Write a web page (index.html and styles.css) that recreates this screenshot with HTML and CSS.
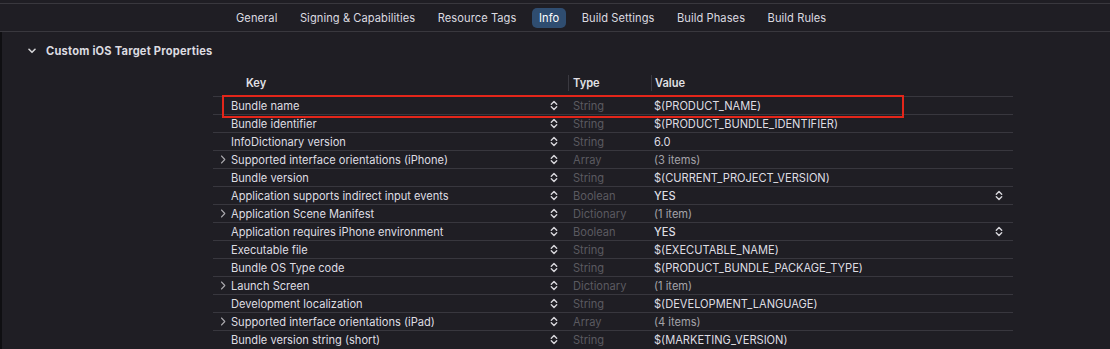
FILE: index.html
```html
<!DOCTYPE html>
<html lang="en">
<head>
<meta charset="utf-8">
<title>Info</title>
<link rel="stylesheet" href="styles.css">
</head>
<body>
<div class="top-strip"></div>
<nav class="tabbar">
  <span class="tab">General</span>
  <span class="tab">Signing &amp; Capabilities</span>
  <span class="tab">Resource Tags</span>
  <span class="tab active">Info</span>
  <span class="tab">Build Settings</span>
  <span class="tab">Build Phases</span>
  <span class="tab">Build Rules</span>
</nav>
<main class="main">
  <div class="section-title">
    <svg class="sec-chev" width="8" height="6" viewBox="0 0 8 6"><path d="M1 1.3 L4 4.3 L7 1.3" fill="none" stroke="#d4d4d6" stroke-width="1.6" stroke-linecap="round" stroke-linejoin="round"/></svg>
    <span>Custom iOS Target Properties</span>
  </div>
  <div class="table">
    <div class="thead">
      <div class="th th-key">Key</div>
      <div class="th th-type">Type</div>
      <div class="th th-value">Value</div>
    </div>
    <div class="rows">
      <div class="row"><div class="key"><i class="disc"></i><span>Bundle name</span><svg class="step" viewBox="0 0 8 11"><path d="M1.3 4.2 L4 1.4 L6.7 4.2 M1.3 6.8 L4 9.6 L6.7 6.8"/></svg></div><div class="type">String</div><div class="value">$(PRODUCT_NAME)</div></div>
      <div class="row"><div class="key"><i class="disc"></i><span>Bundle identifier</span><svg class="step" viewBox="0 0 8 11"><path d="M1.3 4.2 L4 1.4 L6.7 4.2 M1.3 6.8 L4 9.6 L6.7 6.8"/></svg></div><div class="type">String</div><div class="value">$(PRODUCT_BUNDLE_IDENTIFIER)</div></div>
      <div class="row"><div class="key"><i class="disc"></i><span>InfoDictionary version</span><svg class="step" viewBox="0 0 8 11"><path d="M1.3 4.2 L4 1.4 L6.7 4.2 M1.3 6.8 L4 9.6 L6.7 6.8"/></svg></div><div class="type">String</div><div class="value">6.0</div></div>
      <div class="row"><div class="key"><svg class="disc" viewBox="0 0 6 9"><path d="M1.5 1 L4.8 4.5 L1.5 8"/></svg><span>Supported interface orientations (iPhone)</span><svg class="step" viewBox="0 0 8 11"><path d="M1.3 4.2 L4 1.4 L6.7 4.2 M1.3 6.8 L4 9.6 L6.7 6.8"/></svg></div><div class="type">Array</div><div class="value dim">(3 items)</div></div>
      <div class="row"><div class="key"><i class="disc"></i><span>Bundle version</span><svg class="step" viewBox="0 0 8 11"><path d="M1.3 4.2 L4 1.4 L6.7 4.2 M1.3 6.8 L4 9.6 L6.7 6.8"/></svg></div><div class="type">String</div><div class="value">$(CURRENT_PROJECT_VERSION)</div></div>
      <div class="row"><div class="key"><i class="disc"></i><span>Application supports indirect input events</span><svg class="step" viewBox="0 0 8 11"><path d="M1.3 4.2 L4 1.4 L6.7 4.2 M1.3 6.8 L4 9.6 L6.7 6.8"/></svg></div><div class="type">Boolean</div><div class="value popup"><span class="bold">YES</span><svg class="step" viewBox="0 0 8 11"><path d="M1.3 4.2 L4 1.4 L6.7 4.2 M1.3 6.8 L4 9.6 L6.7 6.8"/></svg></div></div>
      <div class="row"><div class="key"><svg class="disc" viewBox="0 0 6 9"><path d="M1.5 1 L4.8 4.5 L1.5 8"/></svg><span>Application Scene Manifest</span><svg class="step" viewBox="0 0 8 11"><path d="M1.3 4.2 L4 1.4 L6.7 4.2 M1.3 6.8 L4 9.6 L6.7 6.8"/></svg></div><div class="type">Dictionary</div><div class="value dim">(1 item)</div></div>
      <div class="row"><div class="key"><i class="disc"></i><span>Application requires iPhone environment</span><svg class="step" viewBox="0 0 8 11"><path d="M1.3 4.2 L4 1.4 L6.7 4.2 M1.3 6.8 L4 9.6 L6.7 6.8"/></svg></div><div class="type">Boolean</div><div class="value popup"><span class="bold">YES</span><svg class="step" viewBox="0 0 8 11"><path d="M1.3 4.2 L4 1.4 L6.7 4.2 M1.3 6.8 L4 9.6 L6.7 6.8"/></svg></div></div>
      <div class="row"><div class="key"><i class="disc"></i><span>Executable file</span><svg class="step" viewBox="0 0 8 11"><path d="M1.3 4.2 L4 1.4 L6.7 4.2 M1.3 6.8 L4 9.6 L6.7 6.8"/></svg></div><div class="type">String</div><div class="value">$(EXECUTABLE_NAME)</div></div>
      <div class="row"><div class="key"><i class="disc"></i><span>Bundle OS Type code</span><svg class="step" viewBox="0 0 8 11"><path d="M1.3 4.2 L4 1.4 L6.7 4.2 M1.3 6.8 L4 9.6 L6.7 6.8"/></svg></div><div class="type">String</div><div class="value">$(PRODUCT_BUNDLE_PACKAGE_TYPE)</div></div>
      <div class="row"><div class="key"><svg class="disc" viewBox="0 0 6 9"><path d="M1.5 1 L4.8 4.5 L1.5 8"/></svg><span>Launch Screen</span><svg class="step" viewBox="0 0 8 11"><path d="M1.3 4.2 L4 1.4 L6.7 4.2 M1.3 6.8 L4 9.6 L6.7 6.8"/></svg></div><div class="type">Dictionary</div><div class="value dim">(1 item)</div></div>
      <div class="row"><div class="key"><i class="disc"></i><span>Development localization</span><svg class="step" viewBox="0 0 8 11"><path d="M1.3 4.2 L4 1.4 L6.7 4.2 M1.3 6.8 L4 9.6 L6.7 6.8"/></svg></div><div class="type">String</div><div class="value">$(DEVELOPMENT_LANGUAGE)</div></div>
      <div class="row"><div class="key"><svg class="disc" viewBox="0 0 6 9"><path d="M1.5 1 L4.8 4.5 L1.5 8"/></svg><span>Supported interface orientations (iPad)</span><svg class="step" viewBox="0 0 8 11"><path d="M1.3 4.2 L4 1.4 L6.7 4.2 M1.3 6.8 L4 9.6 L6.7 6.8"/></svg></div><div class="type">Array</div><div class="value dim">(4 items)</div></div>
      <div class="row"><div class="key"><i class="disc"></i><span>Bundle version string (short)</span><svg class="step" viewBox="0 0 8 11"><path d="M1.3 4.2 L4 1.4 L6.7 4.2 M1.3 6.8 L4 9.6 L6.7 6.8"/></svg></div><div class="type">String</div><div class="value">$(MARKETING_VERSION)</div></div>
      <div class="highlight"></div>
    </div>
  </div>
</main>
</body>
</html>
```
FILE: styles.css
```css
* { box-sizing: border-box; }
html, body {
  margin: 0;
  height: 100%;
  background: #1f1e24;
  overflow: hidden;
}
body {
  font-family: Inter, "Noto Sans", "Liberation Sans", sans-serif;
  font-size: 11.1px;
  color: #dedde2;
}
.top-strip {
  height: 4px;
  border-bottom: 1px solid #39383e;
}
.tabbar {
  height: 28px;
  border-bottom: 1px solid #39383e;
  display: flex;
  align-items: center;
  gap: 8.5px;
  padding-left: 229px;
}
.tab {
  height: 20px;
  line-height: 20px;
  padding: 0 7px;
  border-radius: 5px;
  color: #dcdbe0;
  white-space: nowrap;
  letter-spacing: 0.08px;
}
.tab.active {
  background: #2f4d70;
  color: #ffffff;
}
.main {
  border-left: 2px solid #0f0f12;
  height: 320px;
}
.section-title {
  height: 38px;
  display: flex;
  align-items: center;
  padding-left: 26px;
  gap: 10px;
  font-weight: 700;
  letter-spacing: 0.22px;
  color: #dcdbe0;
}
.sec-chev { display: block; }
.table {
  margin-left: 211px;
  width: 800px;
}
.thead {
  height: 26px;
  display: grid;
  grid-template-columns: 355px 83px 1fr;
  align-items: center;
  font-weight: 600;
  color: #e2e1e6;
}
.th { height: 16px; line-height: 16px; }
.th-key { padding-left: 33px; }
.th-type, .th-value {
  border-left: 1px solid #3a3940;
  padding-left: 4px;
}
.th-value { padding-left: 3px; }
.rows { position: relative; }
.row {
  height: 18px;
  border-top: 1px solid #38373e;
  display: grid;
  grid-template-columns: 355px 83px 1fr;
  align-items: center;
}
.key {
  display: flex;
  align-items: center;
  padding-left: 7px;
  padding-right: 10px;
  white-space: nowrap;
}
.disc {
  width: 6px;
  height: 9px;
  margin-right: 5px;
  flex: none;
  display: block;
}
svg.disc path {
  fill: none;
  stroke: #a9a8ad;
  stroke-width: 1.1;
  stroke-linecap: round;
  stroke-linejoin: round;
}
.key span { flex: 1; }
.step {
  width: 8px;
  height: 11px;
  flex: none;
  display: block;
}
.step path {
  fill: none;
  stroke: #d6d5da;
  stroke-width: 1.4;
  stroke-linecap: round;
  stroke-linejoin: round;
}
.type {
  padding-left: 5px;
  color: #5b5a60;
}
.value {
  padding-left: 3px;
  color: #dedde2;
  white-space: nowrap;
}
.value.dim { color: #a4a3a8; }
.value.popup {
  display: flex;
  align-items: center;
  padding-right: 10px;
}
.popup .bold { flex: 1; font-weight: 500; }
.highlight {
  position: absolute;
  left: 9px;
  top: -1px;
  width: 682px;
  height: 23px;
  border: 2px solid #e3261a;
  pointer-events: none;
}
```
